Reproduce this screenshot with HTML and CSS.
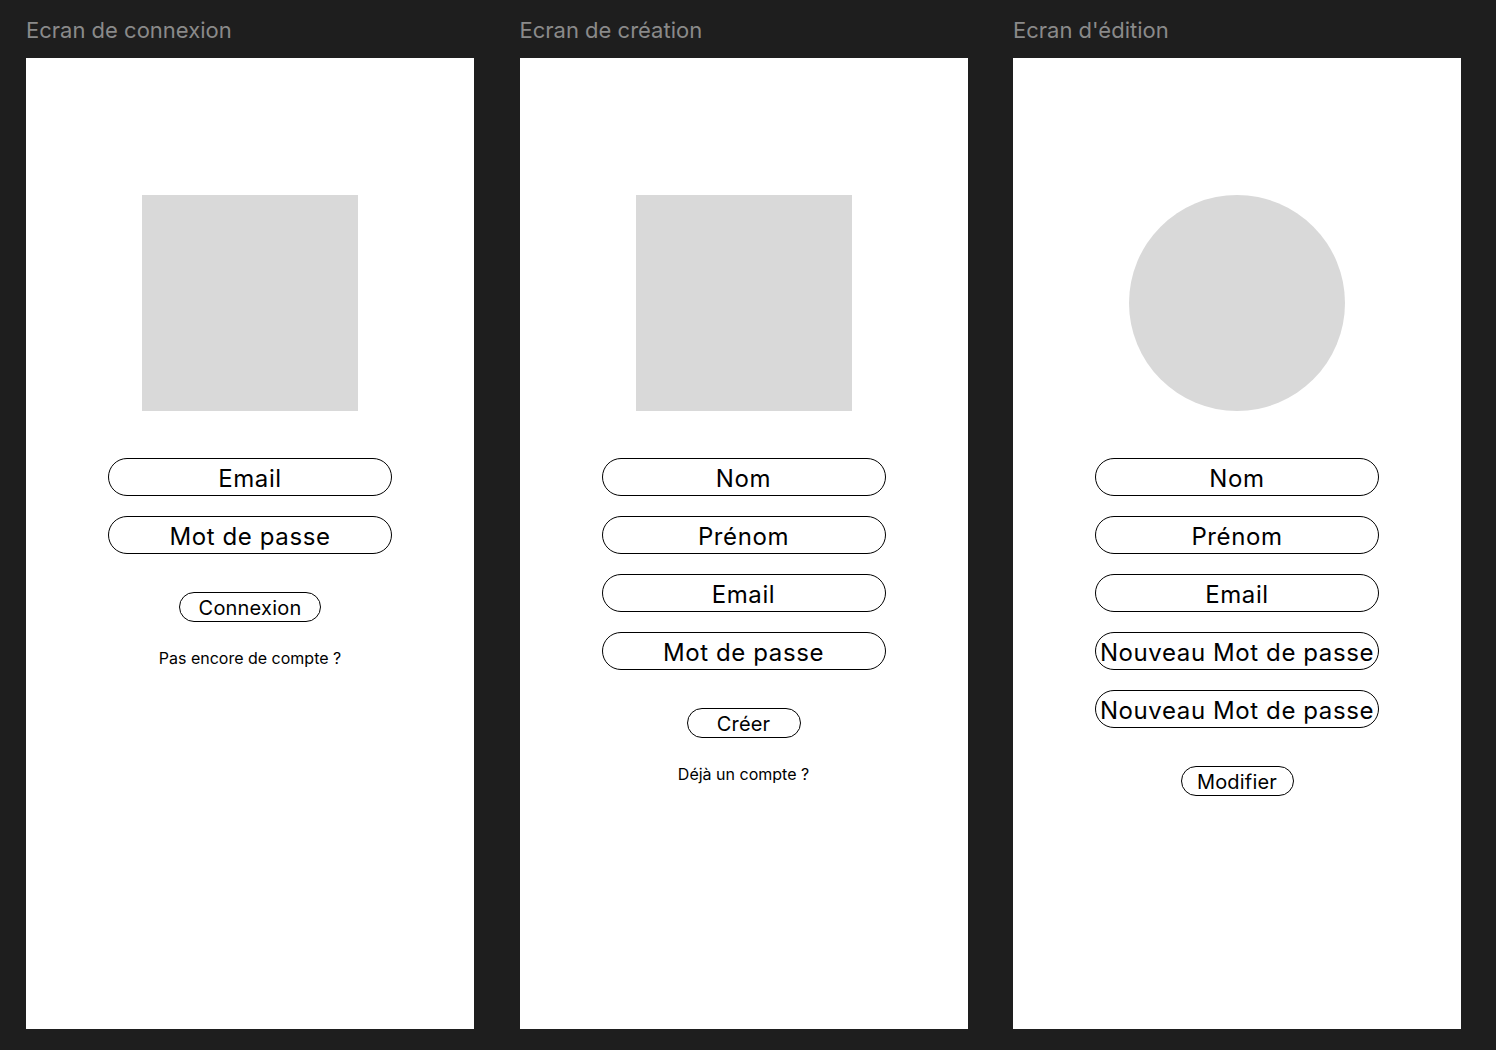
FILE: index.html
```html
<!DOCTYPE html>
<html lang="fr">
<head>
<meta charset="utf-8">
<title>Maquettes</title>
<link rel="stylesheet" href="styles.css">
</head>
<body>
<div class="board">
  <section class="col">
    <div class="label">Ecran de connexion</div>
    <div class="frame">
      <div class="placeholder"></div>
      <div class="fields">
        <div class="field">Email</div>
        <div class="field">Mot de passe</div>
      </div>
      <div class="btn btn-connexion">Connexion</div>
      <div class="link">Pas encore de compte ?</div>
    </div>
  </section>
  <section class="col">
    <div class="label">Ecran de création</div>
    <div class="frame">
      <div class="placeholder"></div>
      <div class="fields">
        <div class="field">Nom</div>
        <div class="field">Prénom</div>
        <div class="field">Email</div>
        <div class="field">Mot de passe</div>
      </div>
      <div class="btn btn-creer">Créer</div>
      <div class="link">Déjà un compte ?</div>
    </div>
  </section>
  <section class="col">
    <div class="label">Ecran d'édition</div>
    <div class="frame">
      <div class="placeholder round"></div>
      <div class="fields">
        <div class="field">Nom</div>
        <div class="field">Prénom</div>
        <div class="field">Email</div>
        <div class="field">Nouveau Mot de passe</div>
        <div class="field">Nouveau Mot de passe</div>
      </div>
      <div class="btn btn-modifier">Modifier</div>
    </div>
  </section>
</div>
</body>
</html>
```
FILE: styles.css
```css
html, body {
  margin: 0;
  padding: 0;
  background: #1e1e1e;
  font-family: Inter, "Noto Sans", sans-serif;
}
.board {
  display: flex;
  gap: 45.5px;
  padding: 17px 26px 0;
}
.col {
  width: 448px;
  flex: none;
}
.label {
  color: #8a8a8a;
  font-size: 22px;
  line-height: 26px;
  margin-bottom: 15px;
  white-space: nowrap;
}
.frame {
  background: #ffffff;
  height: 971px;
  display: flex;
  flex-direction: column;
  align-items: center;
  padding-top: 137px;
  box-sizing: border-box;
  color: #000;
}
.placeholder {
  width: 216px;
  height: 216px;
  background: #d9d9d9;
}
.placeholder.round {
  border-radius: 50%;
}
.fields {
  margin-top: 47px;
  display: flex;
  flex-direction: column;
  gap: 20px;
}
.field {
  width: 284px;
  height: 38px;
  box-sizing: border-box;
  border: 1px solid #000;
  border-radius: 20px;
  font-size: 24px;
  letter-spacing: 0.6px;
  line-height: 36px;
  padding-top: 2px;
  text-align: center;
  white-space: nowrap;
  display: flex;
  justify-content: center;
}
.btn {
  margin-top: 38px;
  height: 30px;
  box-sizing: border-box;
  border: 1px solid #000;
  border-radius: 15px;
  font-size: 20px;
  letter-spacing: 0.2px;
  line-height: 29px;
  padding-top: 1px;
  text-align: center;
}
.btn-connexion { width: 142px; }
.btn-creer { width: 114px; }
.btn-modifier { width: 113px; }
.link {
  margin-top: 26px;
  font-size: 16px;
  line-height: 20px;
}
```
